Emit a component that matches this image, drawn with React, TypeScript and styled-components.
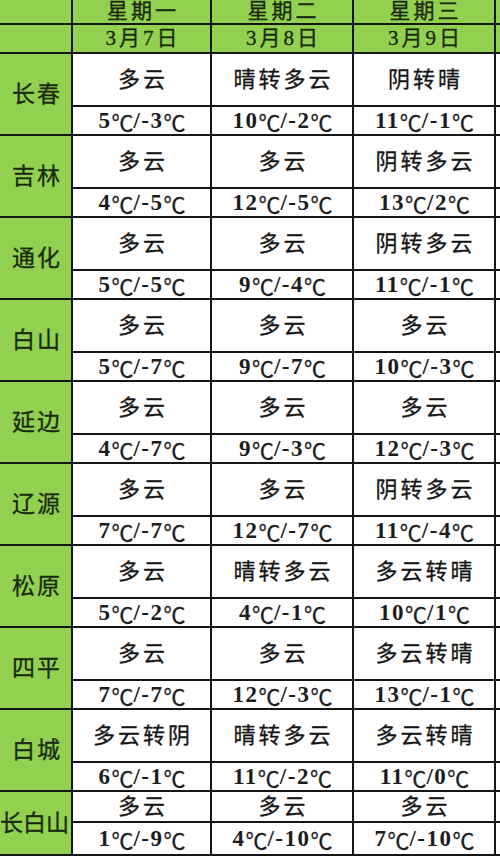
import React from "react";
import styled, { createGlobalStyle } from "styled-components";

const Global = createGlobalStyle`
  html, body { margin: 0; padding: 0; background: #ffffff; }
  body { width: 500px; height: 856px; overflow: hidden; }
`;

const GREEN = "#92d050";
const FONT = `"Liberation Serif", "Noto Sans CJK SC", serif`;

type Day = { w: string; t: string };
type City = { name: string; days: Day[] };

const cities: City[] = [
  { name: "长春", days: [{ w: "多云", t: "5℃/-3℃" }, { w: "晴转多云", t: "10℃/-2℃" }, { w: "阴转晴", t: "11℃/-1℃" }] },
  { name: "吉林", days: [{ w: "多云", t: "4℃/-5℃" }, { w: "多云", t: "12℃/-5℃" }, { w: "阴转多云", t: "13℃/2℃" }] },
  { name: "通化", days: [{ w: "多云", t: "5℃/-5℃" }, { w: "多云", t: "9℃/-4℃" }, { w: "阴转多云", t: "11℃/-1℃" }] },
  { name: "白山", days: [{ w: "多云", t: "5℃/-7℃" }, { w: "多云", t: "9℃/-7℃" }, { w: "多云", t: "10℃/-3℃" }] },
  { name: "延边", days: [{ w: "多云", t: "4℃/-7℃" }, { w: "多云", t: "9℃/-3℃" }, { w: "多云", t: "12℃/-3℃" }] },
  { name: "辽源", days: [{ w: "多云", t: "7℃/-7℃" }, { w: "多云", t: "12℃/-7℃" }, { w: "阴转多云", t: "11℃/-4℃" }] },
  { name: "松原", days: [{ w: "多云", t: "5℃/-2℃" }, { w: "晴转多云", t: "4℃/-1℃" }, { w: "多云转晴", t: "10℃/1℃" }] },
  { name: "四平", days: [{ w: "多云", t: "7℃/-7℃" }, { w: "多云", t: "12℃/-3℃" }, { w: "多云转晴", t: "13℃/-1℃" }] },
  { name: "白城", days: [{ w: "多云转阴", t: "6℃/-1℃" }, { w: "晴转多云", t: "11℃/-2℃" }, { w: "多云转晴", t: "11℃/0℃" }] },
  { name: "长白山", days: [{ w: "多云", t: "1℃/-9℃" }, { w: "多云", t: "4℃/-10℃" }, { w: "多云", t: "7℃/-10℃" }] },
];

const headers = [
  { d: "星期一", date: "3月7日" },
  { d: "星期二", date: "3月8日" },
  { d: "星期三", date: "3月9日" },
];

const Table = styled.div`
  display: grid;
  width: 500px;
  height: 856px;
  grid-template-columns: 71px 137px 140px 140px 1fr;
  grid-template-rows: 23px 27px repeat(9, 51px 27px) 29px 31px;
  gap: 2px;
  background: #151515;
  font-family: ${FONT};
  overflow: hidden;
`;

const Cell = styled.div<{ $green?: boolean; $span?: number }>`
  display: flex;
  align-items: center;
  justify-content: center;
  background: ${(p) => (p.$green ? GREEN : "#ffffff")};
  color: ${(p) => (p.$green ? "#1a2a10" : "#141414")};
  font-size: 22px;
  font-weight: 400;
  line-height: 1;
  white-space: nowrap;
  grid-row: ${(p) => (p.$span ? `span ${p.$span}` : "auto")};
`;

const HeadCell = styled(Cell)`
  letter-spacing: 3px;
  padding-left: 3px;
  font-size: 21px;
  -webkit-text-stroke: 0.3px #1a2a10;
`;

const WeatherCell = styled(Cell)`
  letter-spacing: 3px;
  padding-left: 3px;
  -webkit-text-stroke: 0.3px #141414;
`;

const TempCell = styled(Cell)`
  font-size: 23px;
  font-weight: 700;
  letter-spacing: 1.5px;
  padding-left: 1px;
  color: #1c1c1c;
`;

const Deg = styled.span`
  font-family: "Noto Sans CJK SC", sans-serif;
  font-weight: 400;
  font-size: 22px;
  line-height: 1;
  letter-spacing: 0;
  vertical-align: 2px;
  -webkit-text-stroke: 0.3px #1c1c1c;
`;

const NameCell = styled(Cell)`
  letter-spacing: 2px;
  justify-content: flex-start;
  padding-left: 12px;
  font-size: 23px;
  -webkit-text-stroke: 0.3px #1a2a10;
`;

const NameCellWide = styled(NameCell)`
  padding-left: 0;
  letter-spacing: 0px;
`;

const Temp: React.FC<{ t: string }> = ({ t }) => {
  const parts = t.split("℃");
  return (
    <>
      {parts.map((p, i) => (
        <React.Fragment key={i}>
          {p}
          {i < parts.length - 1 && <Deg>℃</Deg>}
        </React.Fragment>
      ))}
    </>
  );
};

export default function App() {
  return (
    <>
      <Global />
      <Table>
        <Cell $green />
        {headers.map((h) => (
          <HeadCell key={h.d} $green>{h.d}</HeadCell>
        ))}
        <Cell $green />
        <Cell $green />
        {headers.map((h) => (
          <HeadCell key={h.date} $green>{h.date}</HeadCell>
        ))}
        <Cell $green />
        {cities.map((c) => {
          const Name = c.name.length > 2 ? NameCellWide : NameCell;
          return (
            <React.Fragment key={c.name}>
              <Name $green $span={2}>{c.name}</Name>
              {c.days.map((d, i) => (
                <WeatherCell key={"w" + i}>{d.w}</WeatherCell>
              ))}
              <Cell />
              {c.days.map((d, i) => (
                <TempCell key={"t" + i}><Temp t={d.t} /></TempCell>
              ))}
              <Cell />
            </React.Fragment>
          );
        })}
      </Table>
    </>
  );
}
